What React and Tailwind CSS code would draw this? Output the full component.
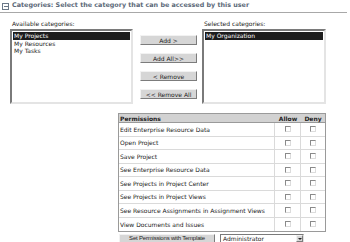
import React from 'react';

const available = ['My Projects', 'My Resources', 'My Tasks'];
const selected = ['My Organization'];
const permissions = [
  'Edit Enterprise Resource Data',
  'Open Project',
  'Save Project',
  'See Enterprise Resource Data',
  'See Projects in Project Center',
  'See Projects in Project Views',
  'See Resource Assignments in Assignment Views',
  'View Documents and Issues',
];

function ListBox({ items, className }) {
  return (
    <div
      className={`h-[75px] bg-white border-2 border-t-[#7a7a7a] border-l-[#7a7a7a] border-r-[#e4e4e4] border-b-[#e4e4e4] p-px ${className}`}
    >
      {items.map((item, i) => (
        <div
          key={item}
          className={`h-[7.5px] leading-[7.5px] pl-px ${i === 0 ? 'bg-[#1c1c1c] text-white' : 'text-[#222]'}`}
        >
          {item}
        </div>
      ))}
    </div>
  );
}

function MoveButton({ children }) {
  return (
    <div className="h-[10px] w-[57px] flex items-center justify-center bg-[#d6d6d6] border border-t-[#f2f2f2] border-l-[#f2f2f2] border-r-[#7c7c7c] border-b-[#7c7c7c] text-[#222]">
      {children}
    </div>
  );
}

function CheckBox() {
  return (
    <div className="w-[6px] h-[6px] bg-white border border-t-[#8a8a8a] border-l-[#8a8a8a] border-r-[#dcdcdc] border-b-[#dcdcdc] mx-auto" />
  );
}

export default function App() {
  return (
    <div className="w-[350px] h-[242px] bg-white overflow-hidden text-[6px] text-[#222] font-['DejaVu_Sans',sans-serif]">
      <div className="flex items-center h-[13px] border-b border-[#a8a8a8] w-[347px] pl-[2px]">
        <div className="w-[7px] h-[7px] border border-[#6b7888] flex items-center justify-center">
          <div className="w-[4px] h-px bg-[#6b7888]" />
        </div>
        <div className="ml-[3px] font-bold text-[6.4px] text-[#5b6878]">
          Categories: Select the category that can be accessed by this user
        </div>
      </div>

      <div className="flex ml-[10px] mt-[7px]">
        <div className="flex flex-col">
          <div className="h-[9px] leading-[8px] pl-[2px]">Available categories:</div>
          <ListBox items={available} className="w-[123px]" />
        </div>
        <div className="flex flex-col gap-[8px] ml-[7px] mt-[15px]">
          <MoveButton>Add &gt;</MoveButton>
          <MoveButton>Add All&gt;&gt;</MoveButton>
          <MoveButton>&lt; Remove</MoveButton>
          <MoveButton>&lt;&lt; Remove All</MoveButton>
        </div>
        <div className="flex flex-col ml-[5px]">
          <div className="h-[9px] leading-[8px] pl-[2px]">Selected categories:</div>
          <ListBox items={selected} className="w-[124px]" />
        </div>
      </div>

      <div className="ml-[118px] mt-[9px] w-[208px] border border-[#9a9a9a]">
        <div className="flex h-[9px] bg-[#d2d2d2] font-bold items-center border-b border-[#9a9a9a]">
          <div className="flex-1 pl-[1px]">Permissions</div>
          <div className="w-[26px] text-center">Allow</div>
          <div className="w-[24px] text-center">Deny</div>
        </div>
        {permissions.map((p, i) => (
          <div
            key={p}
            className={`flex h-[13.5px] items-center ${i < permissions.length - 1 ? 'border-b border-[#dadada]' : ''}`}
          >
            <div className="flex-1 pl-[1px] h-full flex items-center border-r border-[#dadada]">{p}</div>
            <div className="w-[26px] h-full flex items-center border-r border-[#dadada]">
              <CheckBox />
            </div>
            <div className="w-[24px] h-full flex items-center">
              <CheckBox />
            </div>
          </div>
        ))}
      </div>

      <div className="flex ml-[119px] mt-[2px] items-center">
        <div className="w-[96px] h-[9px] flex items-center justify-center bg-[#d6d6d6] border border-t-[#f2f2f2] border-l-[#f2f2f2] border-r-[#7c7c7c] border-b-[#7c7c7c] font-['Liberation_Sans',sans-serif] text-[6px] tracking-[-0.2px]">
          Set Permissions with Template
        </div>
        <div className="ml-[5px] w-[84px] h-[9px] flex items-center bg-white border border-t-[#7a7a7a] border-l-[#7a7a7a] border-r-[#e0e0e0] border-b-[#e0e0e0]">
          <div className="flex-1 pl-[2px]">Administrator</div>
          <div className="w-[7px] h-[7px] bg-[#d6d6d6] border border-t-[#f2f2f2] border-l-[#f2f2f2] border-r-[#7c7c7c] border-b-[#7c7c7c] flex items-center justify-center">
            <svg width="4" height="2" viewBox="0 0 4 2">
              <path d="M0 0 L4 0 L2 2 Z" fill="#222" />
            </svg>
          </div>
        </div>
      </div>
    </div>
  );
}
